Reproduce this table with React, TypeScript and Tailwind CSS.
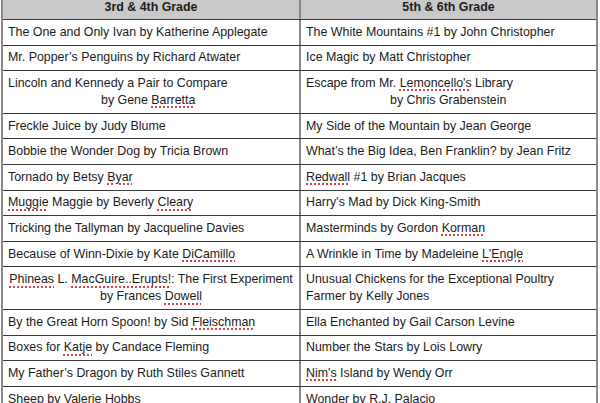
import type { ReactNode } from "react";

type Cell = {
  lines: string[];
  align?: "left" | "center";
  indent?: string;
};

type Row = [Cell, Cell];

// words in {braces} get the spell-check squiggle
function renderText(text: string): ReactNode[] {
  const parts = text.split(/(\{[^}]+\})/g);
  return parts.map((part, i) =>
    part.startsWith("{") ? (
      <span
        key={i}
        className="underline decoration-dotted decoration-[#e04040] decoration-[1.5px] underline-offset-[3px]"
      >
        {part.slice(1, -1)}
      </span>
    ) : (
      <span key={i}>{part}</span>
    )
  );
}

const rows: Row[] = [
  [
    { lines: ["The One and Only Ivan by Katherine Applegate"] },
    { lines: ["The White Mountains #1 by John Christopher"] },
  ],
  [
    { lines: ["Mr. Popper’s Penguins by Richard Atwater"] },
    { lines: ["Ice Magic by Matt Christopher"] },
  ],
  [
    {
      lines: ["Lincoln and Kennedy a Pair to Compare", "by Gene {Barretta}"],
      indent: "pl-[93px]",
    },
    {
      lines: ["Escape from Mr. {Lemoncello's} Library", "by Chris Grabenstein"],
      indent: "pl-[84px]",
    },
  ],
  [
    { lines: ["Freckle Juice by Judy Blume"] },
    { lines: ["My Side of the Mountain by Jean George"] },
  ],
  [
    { lines: ["Bobbie the Wonder Dog by Tricia Brown"] },
    { lines: ["What’s the Big Idea, Ben Franklin? by Jean Fritz"] },
  ],
  [
    { lines: ["Tornado by Betsy {Byar}"] },
    { lines: ["{Redwall} #1 by Brian Jacques"] },
  ],
  [
    { lines: ["{Muggie} Maggie by Beverly {Cleary}"] },
    { lines: ["Harry's Mad by Dick King-Smith"] },
  ],
  [
    { lines: ["Tricking the Tallyman by Jacqueline Davies"] },
    { lines: ["Masterminds by Gordon {Korman}"] },
  ],
  [
    { lines: ["Because of Winn-Dixie by Kate {DiCamillo}"] },
    { lines: ["A Wrinkle in Time by Madeleine {L'Engle}"] },
  ],
  [
    {
      lines: [
        "{Phineas} L. {MacGuire..Erupts!}: The First Experiment",
        "by Frances {Dowell}",
      ],
      align: "center",
    },
    {
      lines: [
        "Unusual Chickens for the Exceptional Poultry",
        "Farmer by Kelly Jones",
      ],
    },
  ],
  [
    { lines: ["By the Great Horn Spoon! by Sid {Fleischman}"] },
    { lines: ["Ella Enchanted by Gail Carson Levine"] },
  ],
  [
    { lines: ["Boxes for {Katje} by Candace Fleming"] },
    { lines: ["Number the Stars by Lois Lowry"] },
  ],
  [
    { lines: ["My Father’s Dragon by Ruth Stiles Gannett"] },
    { lines: ["{Nim's} Island by Wendy Orr"] },
  ],
  [
    { lines: ["Sheep by Valerie Hobbs"] },
    { lines: ["Wonder by R.J. Palacio"] },
  ],
];

function BookCell({ cell, left }: { cell: Cell; left?: boolean }) {
  return (
    <div
      className={`py-[3.8px] px-[5px] whitespace-nowrap ${
        left ? "border-r-2 border-[#8a8a8a]" : ""
      } ${cell.align === "center" ? "text-center px-[3px]" : "text-left"}`}
    >
      {cell.lines.map((line, i) => (
        <div key={i} className={cell.indent && i > 0 ? cell.indent : ""}>
          {renderText(line)}
        </div>
      ))}
    </div>
  );
}

export default function App() {
  return (
    <div className="w-[600px] h-[403px] overflow-hidden bg-white">
      <div
        className="ml-[1px] w-[597px] border-l-2 border-r-2 border-[#8a8a8a] text-[12.4px] leading-[17px] text-[#1c1c1c]"
        style={{ fontFamily: '"Liberation Sans", Arial, sans-serif' }}
      >
        <div className="grid grid-cols-[298px_1fr] bg-[#c9c9c9] border-b border-[#3a3a3a] font-bold">
          <div className="h-[19px] leading-[15px] text-center border-r-2 border-[#8a8a8a]">
            3rd &amp; 4th Grade
          </div>
          <div className="h-[19px] leading-[15px] text-center">
            5th &amp; 6th Grade
          </div>
        </div>

        {rows.map((row, i) => (
          <div
            key={i}
            className="grid grid-cols-[298px_1fr] border-b border-[#3a3a3a]"
          >
            <BookCell cell={row[0]} left />
            <BookCell cell={row[1]} />
          </div>
        ))}
      </div>
    </div>
  );
}
